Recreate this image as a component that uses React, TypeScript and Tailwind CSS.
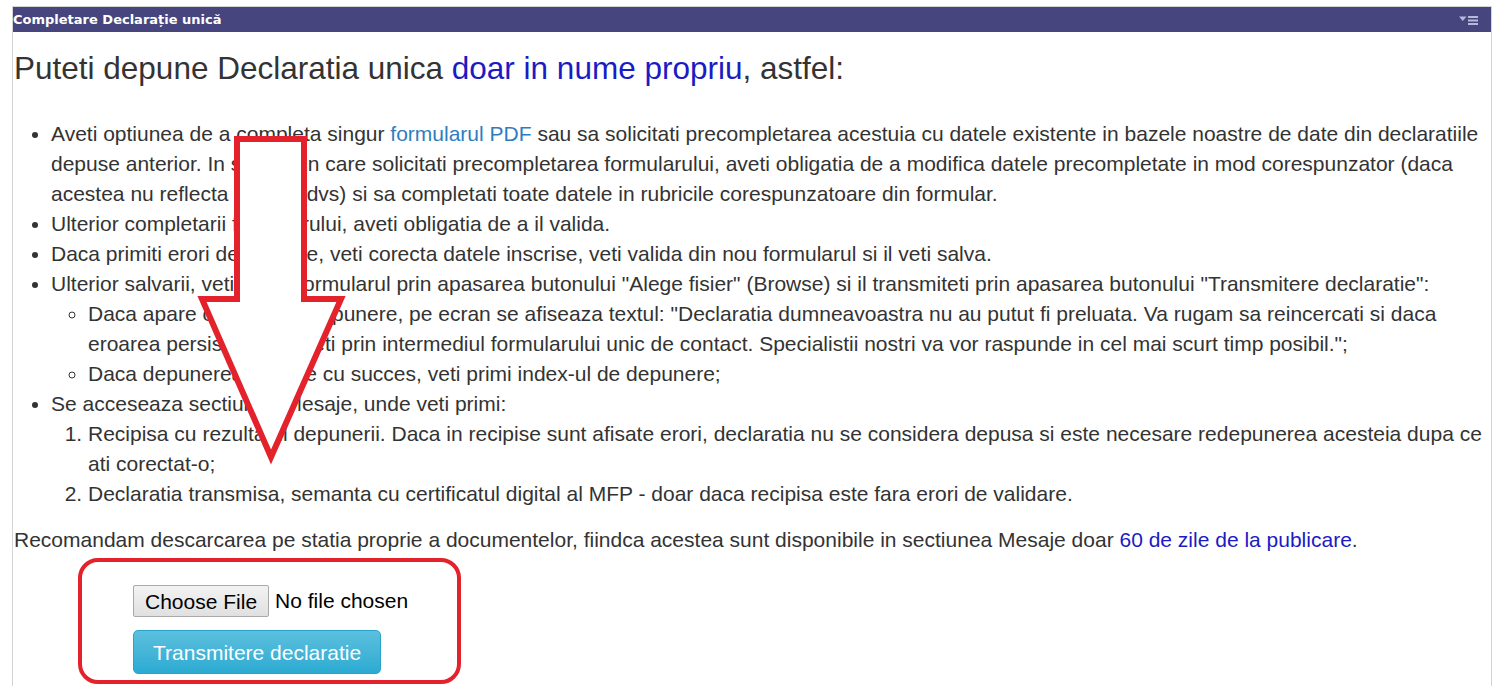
const linkBlue = "text-[#1b1bc4]";
const linkPdf = "text-[#2f7dbf]";

const HeaderIcon = () => (
  <svg width="20" height="10" viewBox="0 0 20 10" className="text-[#b9b8db]">
    <polygon points="0,1.5 7.5,1.5 3.75,6" fill="currentColor" />
    <rect x="9" y="1" width="10" height="2" fill="currentColor" />
    <rect x="9" y="4.5" width="10" height="2" fill="currentColor" />
    <rect x="9" y="8" width="10" height="2" fill="currentColor" />
  </svg>
);

// red annotation arrow drawn over the text
const Arrow = () => (
  <svg
    className="absolute left-0 top-0 pointer-events-none"
    width="1501"
    height="686"
    viewBox="0 0 1501 686"
  >
    <polygon
      points="237,139 304,139 304,299 341,299 271,457 202,299 237,299"
      fill="#ffffff"
      stroke="#e3222b"
      strokeWidth="6"
      strokeLinejoin="miter"
    />
  </svg>
);

export default function App() {
  return (
    <div className="relative w-[1501px] h-[686px] overflow-hidden bg-white font-['Liberation_Sans',Arial,sans-serif] text-[#333333]">
      <div className="mt-[6px] ml-[12px] w-[1480px] h-[680px] border-x border-t border-[#d4d4d4]">
        <div className="flex h-[25px] items-center justify-between bg-[#46457d] pr-[12px]">
          <span className="font-['DejaVu_Sans',Verdana,sans-serif] text-[13px] font-bold text-white">
            Completare Declarație unică
          </span>
          <HeaderIcon />
        </div>

        <div className="px-[1px]">
          <h2 className="mt-[19px] text-[31.5px] leading-[34px] font-normal">
            Puteti depune Declaratia unica <span className={linkBlue}>doar in nume propriu</span>, astfel:
          </h2>

          <ul className="mt-[34px] list-disc pl-[37px] text-[21px] leading-[30px]">
            <li>
              Aveti optiunea de a completa singur <span className={linkPdf}>formularul PDF</span> sau sa solicitati
              precompletarea acestuia cu datele existente in bazele noastre de date din declaratiile depuse anterior. In
              situatia in care solicitati precompletarea formularului, aveti obligatia de a modifica datele precompletate
              in mod corespunzator (daca acestea nu reflecta situatia dvs) si sa completati toate datele in rubricile
              corespunzatoare din formular.
            </li>
            <li>Ulterior completarii formularului, aveti obligatia de a il valida.</li>
            <li>Daca primiti erori de validare, veti corecta datele inscrise, veti valida din nou formularul si il veti salva.</li>
            <li>
              Ulterior salvarii, veti atasa formularul prin apasarea butonului "Alege fisier" (Browse) si il transmiteti
              prin apasarea butonului "Transmitere declaratie":
              <ul className="list-[circle] pl-[37px]">
                <li>
                  Daca apare o eroare la depunere, pe ecran se afiseaza textul: "Declaratia dumneavoastra nu au putut fi
                  preluata. Va rugam sa reincercati si daca eroarea persista, ne scrieti prin intermediul formularului unic
                  de contact. Specialistii nostri va vor raspunde in cel mai scurt timp posibil.";
                </li>
                <li>Daca depunerea se face cu succes, veti primi index-ul de depunere;</li>
              </ul>
            </li>
            <li>
              Se acceseaza sectiunea Mesaje, unde veti primi:
              <ol className="list-decimal pl-[37px]">
                <li>
                  Recipisa cu rezultatul depunerii. Daca in recipise sunt afisate erori, declaratia nu se considera depusa
                  si este necesare redepunerea acesteia dupa ce ati corectat-o;
                </li>
                <li>Declaratia transmisa, semanta cu certificatul digital al MFP - doar daca recipisa este fara erori de validare.</li>
              </ol>
            </li>
          </ul>

          <p className="mt-[16px] text-[21px] leading-[30px]">
            Recomandam descarcarea pe statia proprie a documentelor, fiindca acestea sunt disponibile in sectiunea Mesaje
            doar <span className={linkBlue}>60 de zile de la publicare</span>.
          </p>

          <div className="mt-[30px] flex flex-col items-start gap-[13px] pl-[119px]">
            <div className="flex items-center gap-[6px] text-[21px]">
              <button className="h-[32px] rounded-[2px] border border-[#a9a9a9] bg-gradient-to-b from-[#f3f3f3] to-[#e0e0e0] px-[11px] leading-none text-black">
                Choose File
              </button>
              <span className="text-black">No file chosen</span>
            </div>
            <button className="h-[44px] rounded-[5px] border border-[#28a4c9] bg-gradient-to-b from-[#5bc0de] to-[#2aabd2] px-[19px] text-[21px] leading-none text-white">
              Transmitere declaratie
            </button>
          </div>
        </div>
      </div>

      <div className="absolute left-[78px] top-[558px] h-[126px] w-[383px] rounded-[20px] border-4 border-[#e3222b] pointer-events-none" />
      <Arrow />
    </div>
  );
}
